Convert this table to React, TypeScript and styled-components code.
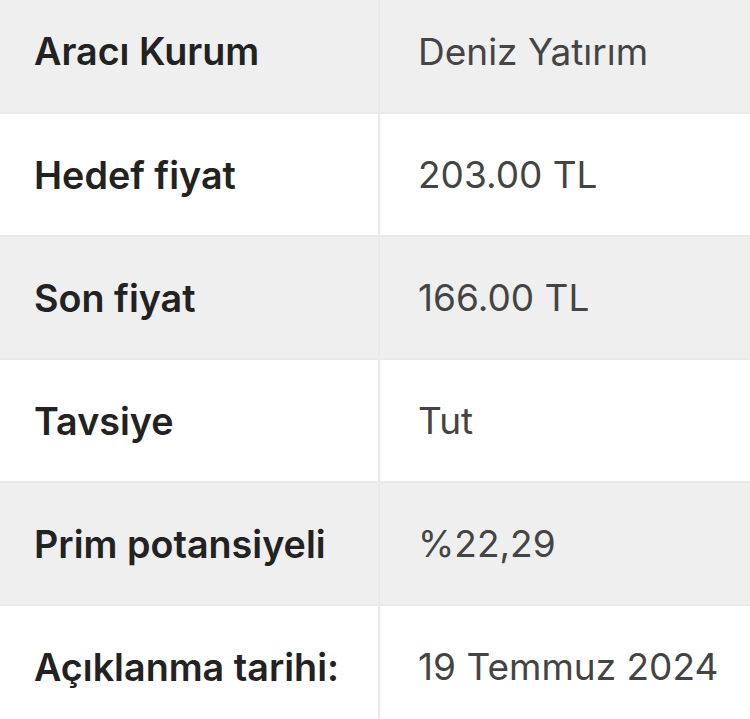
import React from 'react';
import styled, { createGlobalStyle } from 'styled-components';

// Data
const rows = [
  { label: 'Aracı Kurum', value: 'Deniz Yatırım' },
  { label: 'Hedef fiyat', value: '203.00 TL' },
  { label: 'Son fiyat', value: '166.00 TL' },
  { label: 'Tavsiye', value: 'Tut' },
  { label: 'Prim potansiyeli', value: '%22,29' },
  { label: 'Açıklanma tarihi:', value: '19 Temmuz 2024' },
];

const App: React.FC = () => {
  return (
    <>
      <GlobalStyle />
      <Table>
        <tbody>
          {rows.map((row, i) => (
            <Row key={row.label} $shaded={i % 2 === 0}>
              <Label>{row.label}</Label>
              <Value>{row.value}</Value>
            </Row>
          ))}
        </tbody>
      </Table>
    </>
  );
};

const GlobalStyle = createGlobalStyle`
  html, body {
    margin: 0;
    padding: 0;
    background: #ffffff;
    overflow: hidden;
  }
  body {
    font-family: Inter, 'Noto Sans', sans-serif;
  }
`;

const Table = styled.table`
  width: 750px;
  margin-top: -10px;
  border-collapse: collapse;
  table-layout: fixed;
`;

const Row = styled.tr<{ $shaded: boolean }>`
  height: 123px;
  background: ${(p) => (p.$shaded ? '#efefef' : '#ffffff')};
  border-bottom: 2px solid #e9e9e9;
`;

const Label = styled.td`
  width: 344px;
  padding: 0 0 0 34px;
  font-size: 37.7px;
  font-weight: 600;
  color: #222222;
  border-right: 2px solid #e9e9e9;
  white-space: nowrap;
`;

const Value = styled.td`
  padding: 0 0 0 38px;
  font-size: 37px;
  font-weight: 400;
  color: #444444;
  white-space: nowrap;
`;

export default App;
